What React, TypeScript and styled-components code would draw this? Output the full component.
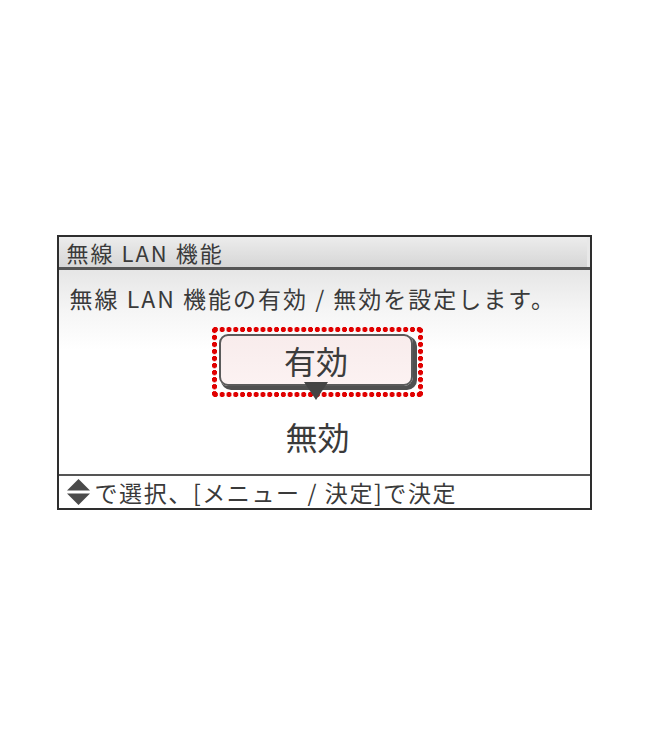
import * as React from "react";
import styled, { createGlobalStyle } from "styled-components";

const GlobalStyle = createGlobalStyle`
    html, body {
        margin: 0;
        padding: 0;
        background: #ffffff;
    }
    body {
        font-family: "Noto Sans CJK JP", "Noto Sans", sans-serif;
        color: #3a3a3a;
    }
`;

const Page = styled.div`
    width: 648px;
    height: 744px;
    display: flex;
    align-items: center;
    justify-content: center;
`;

const Screen = styled.div`
    width: 535px;
    height: 275px;
    box-sizing: border-box;
    border: 2px solid #2e2e2e;
    display: flex;
    flex-direction: column;
    background: #ffffff;
`;

const TitleBar = styled.div`
    height: 33px;
    flex: none;
    box-sizing: border-box;
    padding-left: 8px;
    display: flex;
    align-items: center;
    font-size: 22px;
    letter-spacing: 2px;
    background: linear-gradient(#ececec, #d6d6d6);
    border-bottom: 3px solid #555555;
    box-shadow: inset -3px 0 0 #e8e8e8;
`;

const Body = styled.div`
    flex: 1;
    display: flex;
    flex-direction: column;
    align-items: center;
    background: linear-gradient(#e6e6e6 0px, #f5f5f5 40px, #ffffff 80px);
    border-bottom: 2px solid #555555;
`;

const Description = styled.div`
    align-self: stretch;
    padding: 14px 0 0 11px;
    font-size: 23px;
    line-height: 28px;
    letter-spacing: 2px;
`;

// red dotted ring drawn as four rows of dots
const dot = "radial-gradient(circle, #e00000 2.4px, transparent 2.9px)";

const Focus = styled.div`
    position: relative;
    margin-top: 15px;
    margin-right: 13px;
    padding: 7px 10px 11px 7px;
    background:
        ${dot} 0 0 / 6.7px 5px space no-repeat,
        ${dot} 0 100% / 6.7px 5px space no-repeat,
        ${dot} 0 0 / 5px 6.7px no-repeat space,
        ${dot} 100% 0 / 5px 6.7px no-repeat space;
`;

const Choice = styled.div<{ $selected?: boolean }>`
    width: 194px;
    height: 52px;
    box-sizing: border-box;
    display: flex;
    align-items: center;
    justify-content: center;
    font-size: 32px;
    color: #3c3c3c;
    ${(p) =>
        p.$selected &&
        `
        border-radius: 9px;
        border: 2px solid #5a5a5a;
        background: linear-gradient(#f8ecec, #fcf2f2);
        box-shadow: 3px 3px 0 1px #505050;
    `}
`;

const Pointer = styled.div`
    position: absolute;
    left: 7px;
    top: 55px;
    width: 194px;
    display: flex;
    justify-content: center;

    &::after {
        content: "";
        border-left: 12px solid transparent;
        border-right: 12px solid transparent;
        border-top: 18px solid #454545;
    }
`;

const Other = styled.div`
    margin-top: 19px;
    margin-right: 13px;
    font-size: 32px;
    line-height: 40px;
`;

const Footer = styled.div`
    flex: none;
    height: 32px;
    display: flex;
    align-items: center;
    padding-left: 7px;
    gap: 4px;
    font-size: 23px;
    letter-spacing: 1.6px;
`;

const UpDown = () => (
    <svg width="25" height="28" viewBox="0 0 25 28">
        <polygon points="12.5,1 24,12.5 1,12.5" fill="#4a4a4a" />
        <polygon points="1,15.5 24,15.5 12.5,27" fill="#4a4a4a" />
    </svg>
);

export default function App() {
    return (
        <>
            <GlobalStyle />
            <Page>
                <Screen>
                    <TitleBar>無線 LAN 機能</TitleBar>
                    <Body>
                        <Description>無線 LAN 機能の有効 / 無効を設定します。</Description>
                        <Focus>
                            <Choice $selected>有効</Choice>
                            <Pointer />
                        </Focus>
                        <Other>無効</Other>
                    </Body>
                    <Footer>
                        <UpDown />
                        <span>で選択、[メニュー / 決定]で決定</span>
                    </Footer>
                </Screen>
            </Page>
        </>
    );
}
